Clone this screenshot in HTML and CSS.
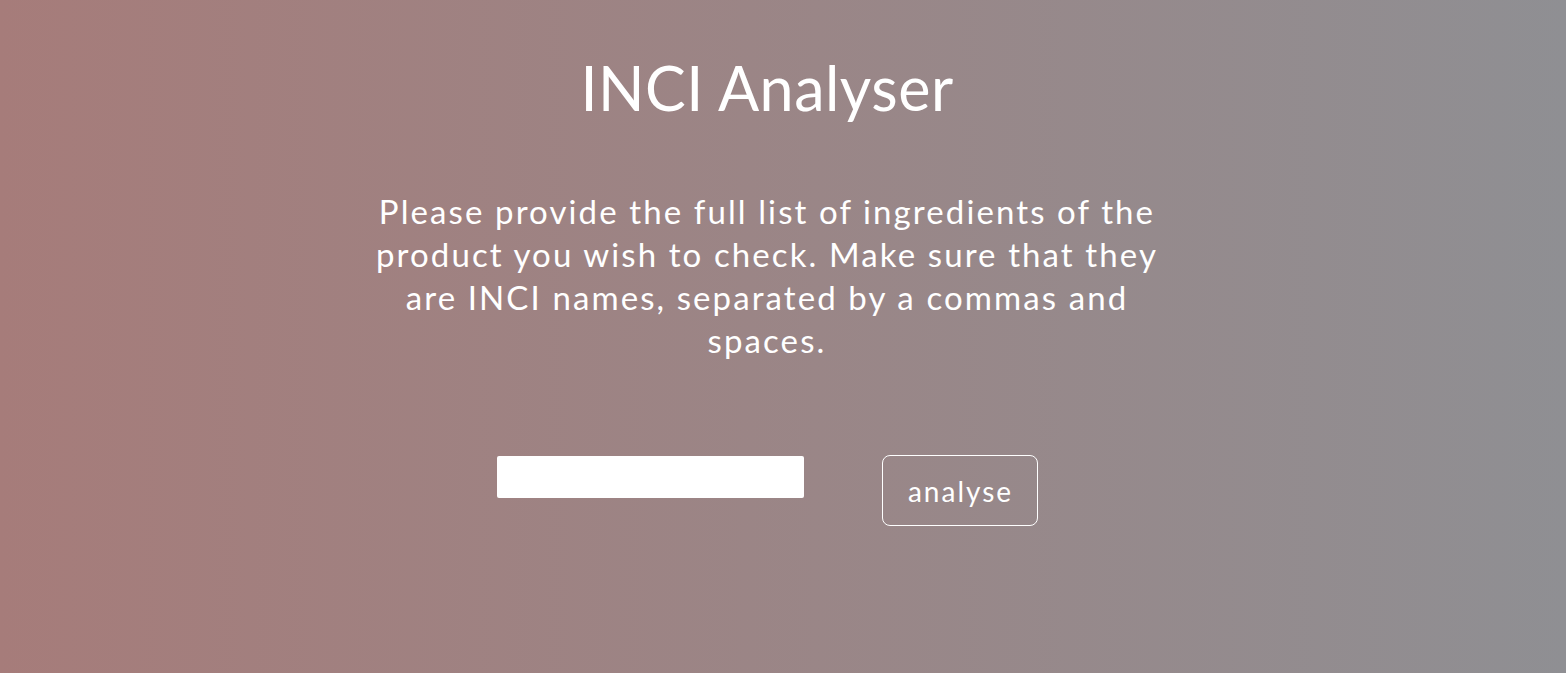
FILE: index.html
```html
<!DOCTYPE html>
<html lang="en">
<head>
<meta charset="utf-8">
<title>INCI Analyser</title>
<link rel="stylesheet" href="styles.css">
</head>
<body>
<main class="page">
  <h1 class="title">INCI Analyser</h1>
  <p class="intro">Please provide the full list of ingredients of the<br>product you wish to check. Make sure that they<br>are INCI names, separated by a commas and<br>spaces.</p>
  <form class="form">
    <input class="field" type="text" aria-label="Ingredients">
    <button class="btn" type="button">analyse</button>
  </form>
</main>
</body>
</html>
```
FILE: styles.css
```css
html, body {
  margin: 0;
  height: 100%;
}
body {
  background: linear-gradient(to right, #a67c7a 0%, #8f8f93 100%);
  font-family: "Lato", "Open Sans", sans-serif;
  color: #fff;
  overflow: hidden;
}
.page {
  display: flex;
  flex-direction: column;
  align-items: center;
  padding-right: 32px;
}
.title {
  margin: 48px 0 0;
  font-size: 61px;
  font-weight: 400;
  line-height: 80px;
  letter-spacing: 0.5px;
}
.intro {
  margin: 62px 0 0;
  font-size: 33px;
  line-height: 43px;
  text-align: center;
  font-weight: 400;
  letter-spacing: 2.1px;
}
.form {
  display: flex;
  align-items: flex-start;
  gap: 78px;
  margin-top: 93px;
}
.field {
  width: 307px;
  height: 42px;
  box-sizing: border-box;
  border: none;
  border-radius: 2px;
  background: #fff;
  margin: 1px 0 0;
  padding: 0 8px;
}
.btn {
  width: 156px;
  height: 71px;
  box-sizing: border-box;
  border: 1px solid #fff;
  border-radius: 8px;
  background: transparent;
  color: #fff;
  font-family: inherit;
  font-size: 28px;
  letter-spacing: 2px;
  padding: 0 0 0 2px;
}
```
